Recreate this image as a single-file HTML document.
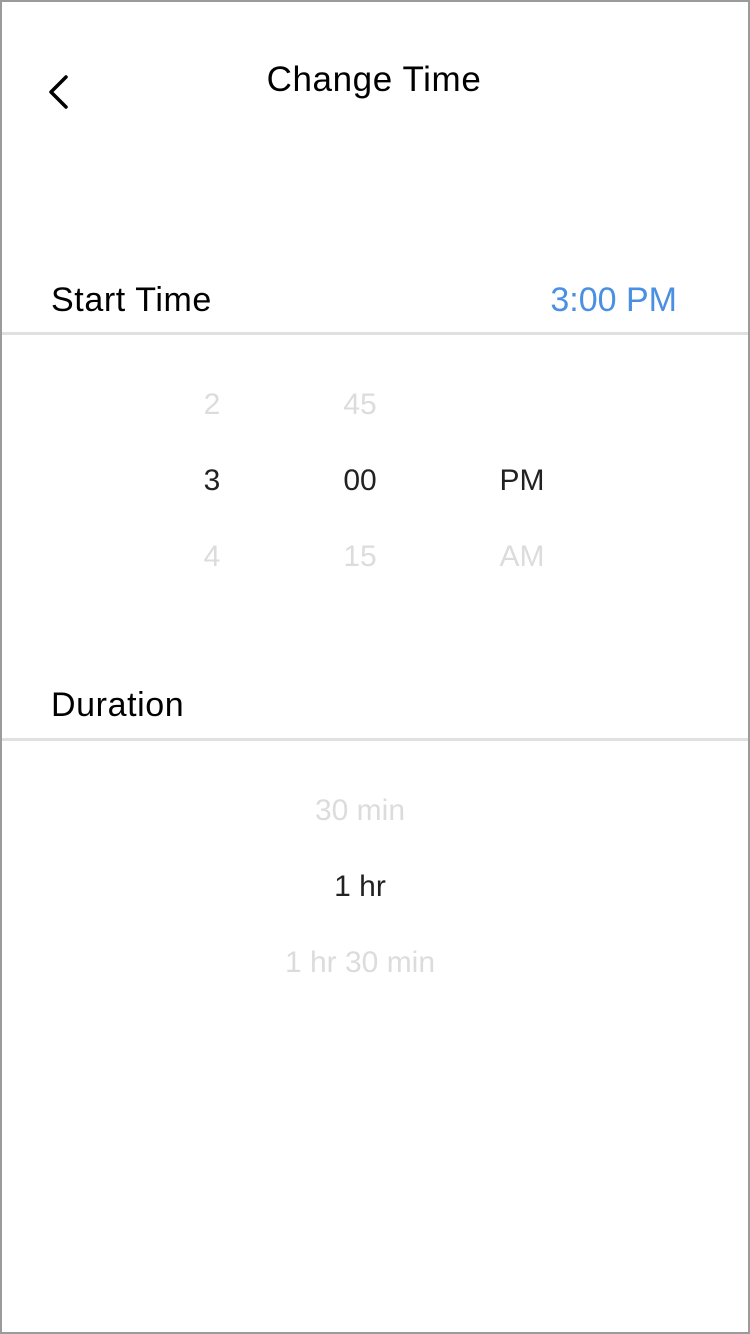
<!DOCTYPE html>
<html><head><meta charset="utf-8"><style>
body{margin:0;width:750px;height:1334px;overflow:hidden;background:#fff;font-family:"Liberation Sans",sans-serif;}
.frame{position:absolute;left:0;top:0;width:746px;height:1330px;border:2px solid #9b9b9b;}
.t{position:absolute;white-space:nowrap;line-height:1;}
.line{position:absolute;left:2px;width:746px;height:3px;background:#e0e0e0;}
.c{transform:translateX(-50%);}
.f{color:#dcdcdc}
.d{color:#222}
</style></head><body>
<div class="frame"></div>
<svg style="position:absolute;left:44px;top:74px" width="30" height="36" viewBox="0 0 30 36"><path d="M22 3 L7 18 L22 33" fill="none" stroke="#000" stroke-width="3.5" stroke-linecap="round" stroke-linejoin="round"/></svg>
<div class="t" style="left:374px;top:62px;font-size:35px;letter-spacing:0.6px;color:#000;transform:translateX(-50%)">Change Time</div>
<div class="t" style="left:51px;top:283px;font-size:34px;letter-spacing:0.6px;color:#000">Start Time</div>
<div class="t" style="right:73px;top:283px;font-size:34px;color:#4a90e2">3:00 PM</div>
<div class="line" style="top:332px"></div>
<div class="t c f" style="left:212px;top:390px;font-size:30px">2</div>
<div class="t c f" style="left:360px;top:390px;font-size:30px">45</div>
<div class="t c d" style="left:212px;top:466px;font-size:30px">3</div>
<div class="t c d" style="left:360px;top:466px;font-size:30px">00</div>
<div class="t c d" style="left:522px;top:466px;font-size:30px">PM</div>
<div class="t c f" style="left:212px;top:542px;font-size:30px">4</div>
<div class="t c f" style="left:360px;top:542px;font-size:30px">15</div>
<div class="t c f" style="left:522px;top:542px;font-size:30px">AM</div>
<div class="t" style="left:51px;top:688px;font-size:34px;letter-spacing:0.6px;color:#000">Duration</div>
<div class="line" style="top:738px"></div>
<div class="t c f" style="left:360px;top:796px;font-size:30px">30 min</div>
<div class="t c d" style="left:360px;top:872px;font-size:30px">1 hr</div>
<div class="t c f" style="left:360px;top:948px;font-size:30px">1 hr 30 min</div>
</body></html>
